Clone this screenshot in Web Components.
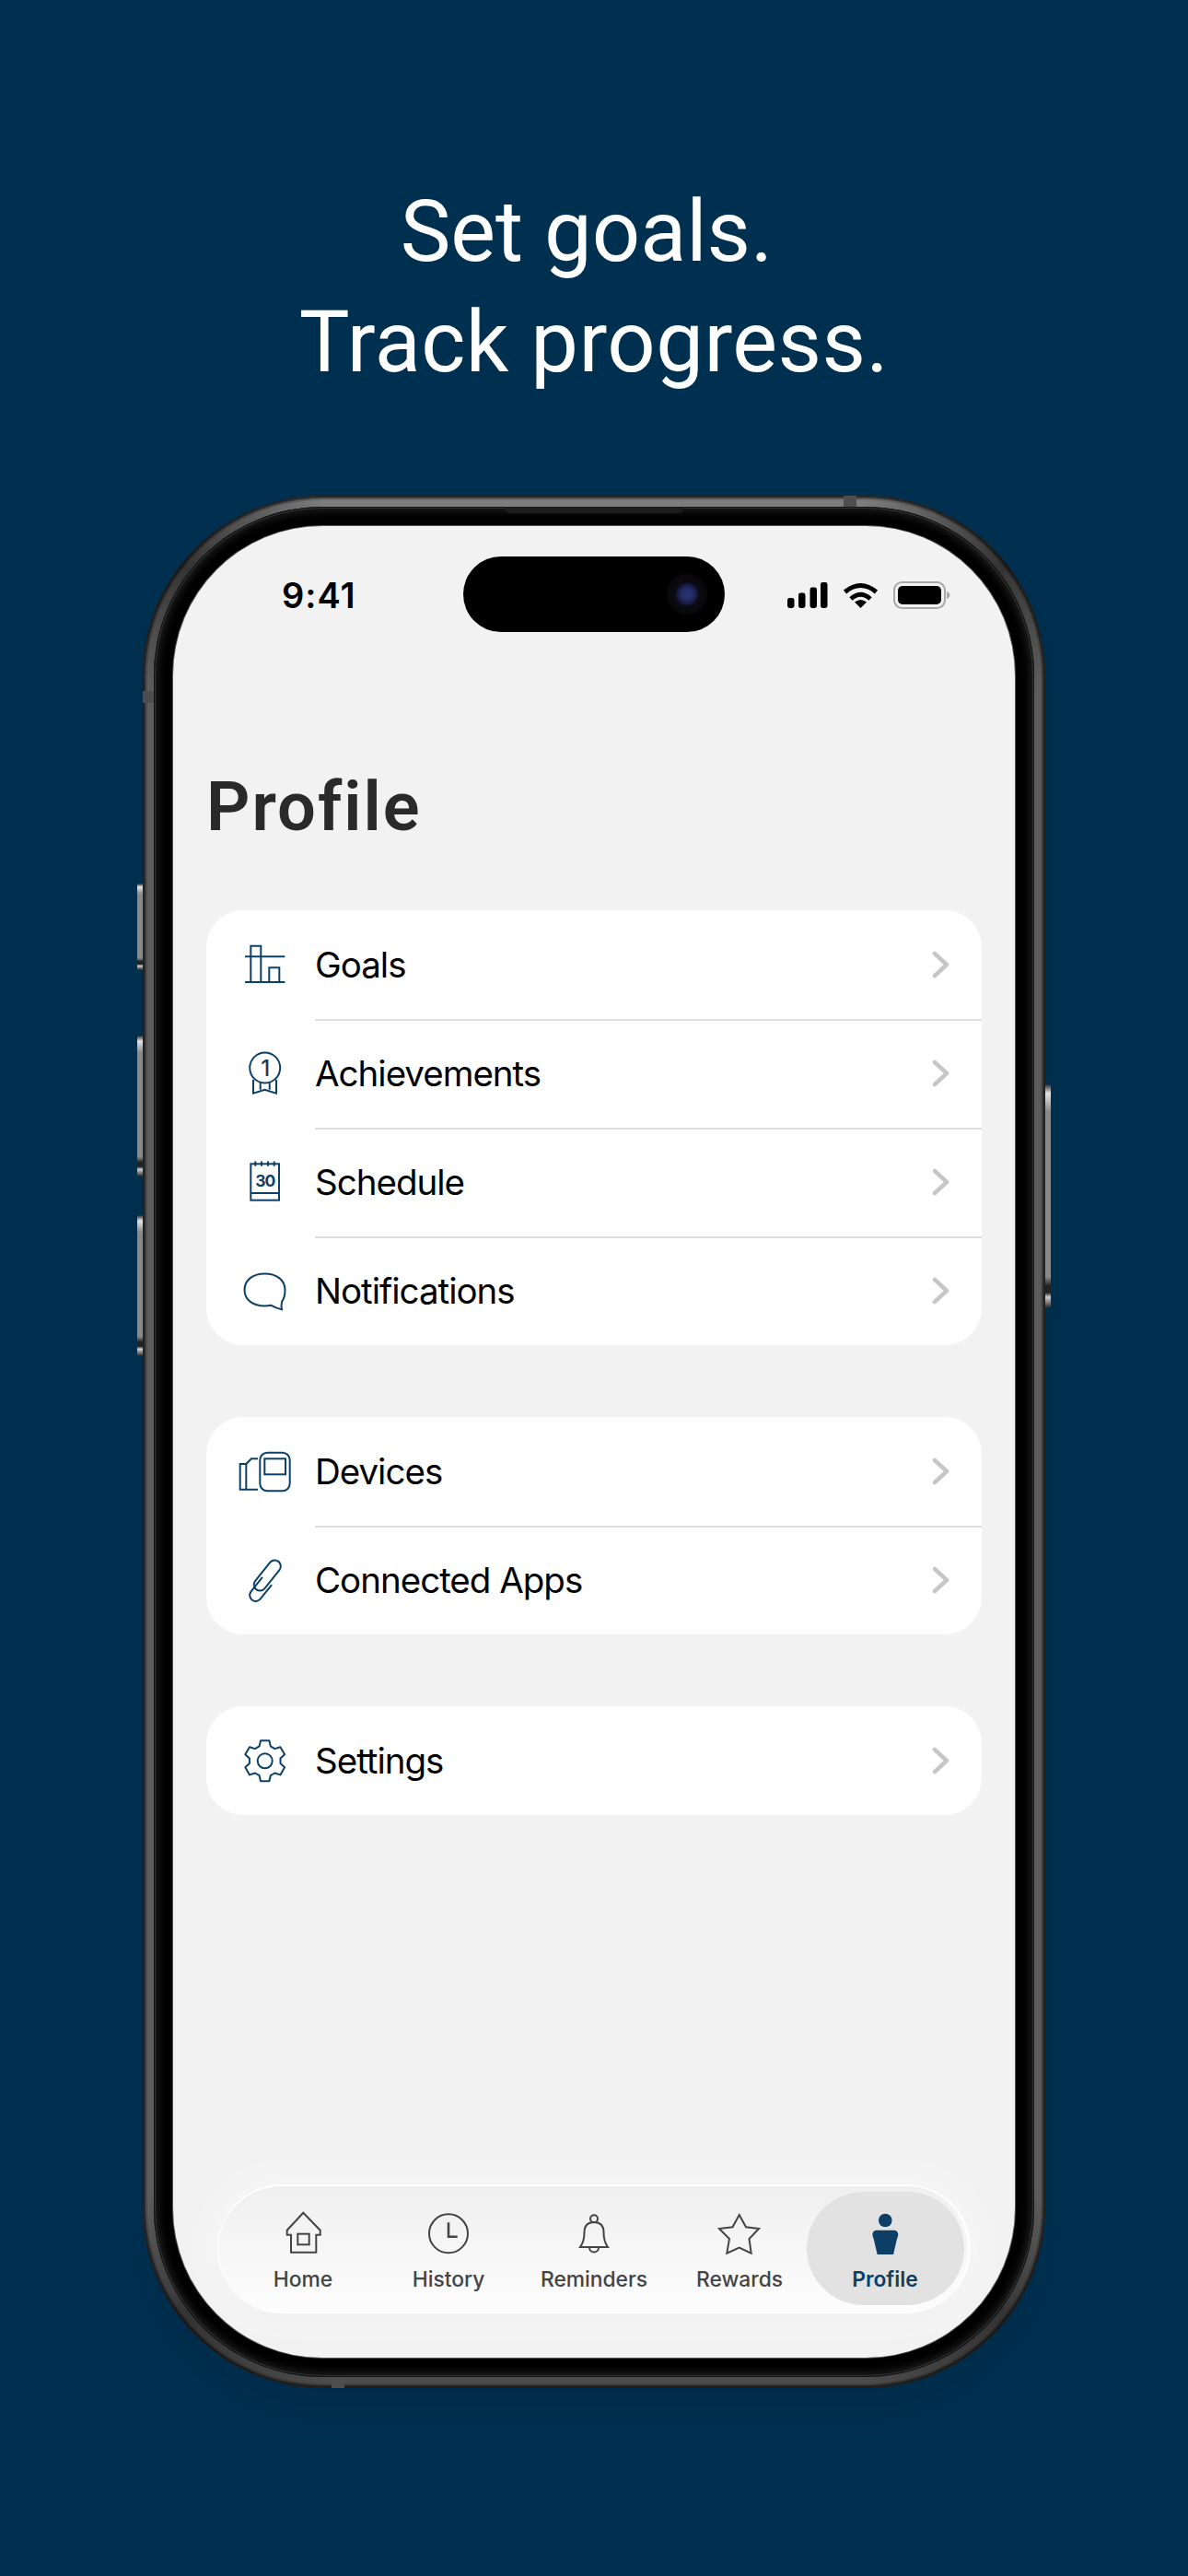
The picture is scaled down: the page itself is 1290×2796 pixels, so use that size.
<!DOCTYPE html>
<html lang="en">
<head>
<meta charset="utf-8">
<title>Profile</title>
<style>
  html, body { margin: 0; background: #003050; }
</style>
</head>
<body>
<promo-page>
  <span slot="headline" style="margin-right:16px;letter-spacing:0">Set goals.</span>
  <span slot="headline">Track progress.</span>
  <phone-frame>
    <status-bar time="9:41"></status-bar>
    <screen-title>Profile</screen-title>
    <row-group>
      <profile-row icon="goals">Goals</profile-row>
      <profile-row icon="achievements">Achievements</profile-row>
      <profile-row icon="schedule">Schedule</profile-row>
      <profile-row icon="notifications">Notifications</profile-row>
    </row-group>
    <row-group>
      <profile-row icon="devices">Devices</profile-row>
      <profile-row icon="apps">Connected Apps</profile-row>
    </row-group>
    <row-group>
      <profile-row icon="settings">Settings</profile-row>
    </row-group>
    <tab-bar>
      <tab-item icon="home">Home</tab-item>
      <tab-item icon="history">History</tab-item>
      <tab-item icon="bell">Reminders</tab-item>
      <tab-item icon="star">Rewards</tab-item>
      <tab-item icon="person" active>Profile</tab-item>
    </tab-bar>
  </phone-frame>
</promo-page>

<script>
function gearPath() {
  const pts = []
  for (let i = 0; i < 6; i++) {
    const a = i * 60 - 90
    for (const [off, r] of [[-21, 17], [-12, 22.5], [12, 22.5], [21, 17]]) {
      const t = (a + off) * Math.PI / 180
      pts.push((39.7 + r * Math.cos(t)).toFixed(1) + ' ' + (40.3 + r * Math.sin(t)).toFixed(1))
    }
  }
  return 'M' + pts.join('L') + 'Z'
}

const ICONS = {
  goals: `<path d="M18 31.3H61.3M18 59H61.3M24.3 59V19.7H35.3V59M44.3 59V43.3H55.3V59"/>`,
  achievements: `<circle cx="39.7" cy="34" r="16.5"/>
    <text x="39.7" y="42.5" font-size="24" font-weight="500" text-anchor="middle">1</text>
    <path d="M27 47V61.7L39.5 57.7L52 61.7V47M34.7 50V57.7M44.7 50V57.7"/>`,
  schedule: `<rect x="24.3" y="20.3" width="30.7" height="39.4"/>
    <path d="M24.3 52H55M29.3 17.5V22.7M36 17.5V22.7M43 17.5V22.7M49.7 17.5V22.7"/>
    <text x="39.8" y="45.3" font-size="17.5" font-weight="700" text-anchor="middle">30</text>`,
  notifications: `<path d="M39.5 21.5C27 21.5 17.5 28 17.5 39C17.5 50 27 56.5 39.5 56.5C41.5 56.5 44 56.2 46 55.7C49 57.5 53.5 59.5 58 60.2C57.2 57 57.5 54 58.2 51.5C60.5 48.5 61.5 44 61.5 39C61.5 28 52 21.5 39.5 21.5Z"/>`,
  devices: `<rect x="34.3" y="19.7" width="32.4" height="41.6" rx="8"/>
    <rect x="39.3" y="26.3" width="22.7" height="17"/>
    <path d="M32 26.3H25L19.3 32V59.7M32 59.7H12.7V32H19.3"/>`,
  apps: `<path d="M47.07 45.06L34.57 60.66A6.5 6.5 0 0 1 24.43 52.54L36.93 36.94"/>
    <path d="M55.4 29.1L39.4 49.1A6.5 6.5 0 0 1 29.2 40.9L45.2 20.9A6.5 6.5 0 0 1 55.4 29.1Z"/>
    <path d="M36.93 36.94A6.5 6.5 0 0 1 47.07 45.06" stroke="#fff" stroke-width="0"/>`,
  settings: `<path stroke-linejoin="round" d="${gearPath()}"/><circle cx="39.7" cy="40.3" r="8"/>`,
  home: `<path d="M24.3 2.7L42.7 21.7V26.7H38.3V45.7H11V26.7H6.7V21.7Z"/><rect x="18.3" y="25.7" width="12.4" height="11.6"/>`,
  history: `<circle cx="24" cy="25.3" r="21"/><path stroke-width="2.6" d="M24 13.3V28.7H33.7"/>`,
  bell: `<circle cx="24" cy="9.3" r="4"/>
    <path d="M9 40C12 36 13.5 32 13.5 24C13.5 17 17 13 24 13C31 13 34.5 17 34.5 24C34.5 32 36 36 39 40Z"/>
    <path d="M19 40.5A5 5 0 0 0 29 40.5"/>`,
  star: `<path d="M23.7 5L31 18.3L45 20L34.5 31L36.7 46.7L23.7 40.7L10.3 46.7L13 31L2 20L16.5 18.3Z"/>`,
  person: `<circle cx="24.3" cy="11" r="7.3" fill="currentColor" stroke="none"/>
    <path fill="currentColor" stroke="none" d="M15 21.7H33.6C36.5 21.7 38.3 23.5 38.3 26.3C38.3 28 37.6 29.5 36.9 31.5L33 48.3H15.7L11.8 31.5C11.1 29.5 10.4 28 10.4 26.3C10.4 23.5 12.2 21.7 15 21.7Z"/>`
}

window.customElements.define('ui-icon', class extends HTMLElement {
  constructor() {
    super()
    this.attachShadow({mode: "open"})
  }

  _render() {
    const size = this.getAttribute('size') ?? '80'
    this.shadowRoot.innerHTML = `
      <style>
        :host { display: block; width: ${size}px; height: ${size}px; }
        svg { display: block; fill: none; stroke: currentColor; stroke-width: 2; }
        text { fill: currentColor; stroke: none; font-family: "Inter", "Liberation Sans", sans-serif; }
      </style>
      <svg width="${size}" height="${size}" viewBox="0 0 ${size} ${size}">${ICONS[this.getAttribute('name')] ?? ''}</svg>
    `
  }

  attributeChangedCallback() {
    this._render()
  }

  static get observedAttributes() { return ['name', 'size'] }
})

window.customElements.define('promo-page', class extends HTMLElement {
  constructor() {
    super()
    this.attachShadow({mode: "open"})
    this.shadowRoot.innerHTML = `
      <style>
        :host {
          display: flex;
          flex-direction: column;
          align-items: center;
          height: 2796px;
          overflow: hidden;
          background: #003050;
        }
        .headline {
          display: flex;
          flex-direction: column;
          align-items: center;
          margin: 192px 0 106px;
          color: #fff;
          font: 400 92px/120px "Roboto", "Liberation Sans", sans-serif;
          letter-spacing: .5px;
        }
      </style>
      <div class="headline"><slot name="headline"></slot></div>
      <slot></slot>
    `
  }
})

window.customElements.define('phone-frame', class extends HTMLElement {
  constructor() {
    super()
    this.attachShadow({mode: "open"})
    this.shadowRoot.innerHTML = `
      <style>
        :host {
          display: block;
          position: relative;
          width: 980px;
          height: 2054px;
        }
        .metal {
          box-sizing: border-box;
          height: 100%;
          padding: 12px;
          border-radius: 195px;
          background: conic-gradient(#7d7d7d 0 16deg, #343434 25deg, #5c5c5c 30.5deg 149.5deg, #343434 155deg, #4c4c4c 164deg 196deg, #343434 205deg, #5c5c5c 210.5deg 329.5deg, #343434 335deg, #7d7d7d 344deg);
          box-shadow: inset 0 0 0 1px #1e1e1e, inset 0 0 0 3px rgba(0,0,0,.45), inset 0 0 0 5px rgba(0,0,0,.15), 0 24px 40px rgba(0,0,0,.08);
        }
        .bezel {
          box-sizing: border-box;
          height: 100%;
          padding: 21px;
          border-radius: 183px;
          background: #000;
          box-shadow: inset 0 0 0 1px #111, inset 0 0 0 2px #333, inset 0 0 9px 5px #1d1d1d;
        }
        .screen {
          box-sizing: border-box;
          display: flex;
          flex-direction: column;
          height: 100%;
          padding: 0 36px;
          border-radius: 162px;
          overflow: hidden;
          background: #f2f2f2;
          box-shadow: 0 0 0 1px #555;
        }
        .speaker {
          position: absolute;
          top: 12px;
          left: 393px;
          width: 194px;
          height: 7px;
          border-radius: 0 0 5px 5px;
          background: #1c1c1c;
        }
        .band { position: absolute; background: #4e4e4e; }
        .band.a { left: 0; top: 212px; width: 12px; height: 13px; }
        .band.b { left: 761px; top: 0; width: 14px; height: 12px; }
        .band.c { left: 205px; bottom: 0; width: 14px; height: 11px; }
        .btn {
          position: absolute;
          width: 6px;
          border-radius: 2px 0 0 2px;
          background: linear-gradient(#2a2a2a 0, #e4e4e4 4%, #8a8a8a 12%, #8a8a8a 86%, #222 90%, #222 93%, #cfcfcf 95%, #222 100%);
        }
        .btn.l { left: -6px; }
        .btn.r { right: -6px; border-radius: 0 2px 2px 0; }
      </style>
      <div class="btn l" style="top:421px;height:94px"></div>
      <div class="btn l" style="top:586px;height:153px"></div>
      <div class="btn l" style="top:781px;height:153px"></div>
      <div class="btn r" style="top:639px;height:243px"></div>
      <div class="metal"><div class="bezel"><div class="screen"><slot></slot></div></div></div>
      <div class="speaker"></div>
      <div class="band a"></div>
      <div class="band b"></div>
      <div class="band c"></div>
    `
  }
})

window.customElements.define('status-bar', class extends HTMLElement {
  constructor() {
    super()
    this.attachShadow({mode: "open"})
    this.shadowRoot.innerHTML = `
      <style>
        :host {
          display: grid;
          grid-template-columns: 1fr 284px 1fr;
          align-items: center;
          margin: 32px -36px 0;
          height: 82px;
          color: #000;
        }
        .time {
          padding: 2px 0 0 118px;
          font: 600 38px/82px "Inter", "Liberation Sans", sans-serif;
          letter-spacing: 1px;
        }
        .island {
          display: flex;
          align-items: center;
          justify-content: flex-end;
          height: 82px;
          padding-right: 19px;
          box-sizing: border-box;
          border-radius: 41px;
          background: #000;
        }
        .camera {
          width: 44px;
          height: 44px;
          border-radius: 50%;
          background: radial-gradient(circle, #27306e 0 5px, #15173c 11px, #0a0a12 13px, #080808 22px);
        }
        .icons {
          display: flex;
          align-items: center;
          gap: 16px;
          padding: 2px 0 0 68px;
        }
        svg { display: block; }
      </style>
      <div class="time"></div>
      <div class="island"><div class="camera"></div></div>
      <div class="icons">
        <svg width="44" height="28" viewBox="0 0 44 28" fill="#000">
          <rect x="0" y="17" width="7.5" height="11" rx="2.4"/>
          <rect x="12" y="11.5" width="7.5" height="16.5" rx="2.4"/>
          <rect x="24.5" y="5.5" width="7.5" height="22.5" rx="2.4"/>
          <rect x="36" y="0" width="7.5" height="28" rx="2.4"/>
        </svg>
        <svg width="39" height="28" viewBox="0 0 39 28" fill="none" stroke="#000" stroke-width="5">
          <path d="M2.5 10.5Q19.5 -3.5 36.5 10.5"/>
          <path d="M9 18Q19.5 8.5 30 18"/>
          <path fill="#000" stroke="none" d="M19.5 28L13 21.5Q19.5 16.5 26 21.5Z"/>
        </svg>
        <svg width="62" height="30" viewBox="0 0 62 30">
          <rect x="1" y="1" width="55" height="28" rx="8.5" fill="none" stroke="#a8a8a8" stroke-width="2"/>
          <rect x="5" y="5" width="47" height="20" rx="5" fill="#000"/>
          <path d="M58 11C60.5 12 61.5 13.5 61.5 15C61.5 16.5 60.5 18 58 19Z" fill="#a8a8a8"/>
        </svg>
      </div>
    `
  }

  connectedCallback() {
    this.shadowRoot.querySelector('.time').textContent = this.getAttribute('time')
  }
})

window.customElements.define('screen-title', class extends HTMLElement {
  constructor() {
    super()
    this.attachShadow({mode: "open"})
    this.shadowRoot.innerHTML = `
      <style>
        :host {
          display: block;
          margin: 146px 0 67px;
          color: #2a2a2a;
          font: 600 74px/90px "Roboto", "Liberation Sans", sans-serif;
          letter-spacing: 2px;
        }
      </style>
      <slot></slot>
    `
  }
})

window.customElements.define('row-group', class extends HTMLElement {
  constructor() {
    super()
    this.attachShadow({mode: "open"})
    this.shadowRoot.innerHTML = `
      <style>
        :host {
          display: block;
          overflow: hidden;
          margin-bottom: 78px;
          border-radius: 40px;
          background: #fff;
        }
      </style>
      <slot></slot>
    `
  }
})

window.customElements.define('profile-row', class extends HTMLElement {
  constructor() {
    super()
    this.attachShadow({mode: "open"})
    this.shadowRoot.innerHTML = `
      <style>
        :host {
          display: flex;
          align-items: center;
          height: 118px;
          padding-left: 24px;
          color: #000;
          font: 400 38.5px/1 "Inter", "Liberation Sans", sans-serif;
          letter-spacing: -1px;
        }
        ui-icon { flex: none; margin-right: 14px; color: #0d4066; }
        .body {
          flex: 1;
          display: flex;
          align-items: center;
          justify-content: space-between;
          height: 100%;
          box-sizing: border-box;
          padding-right: 34px;
        }
        :host(:not(:first-child)) .body { box-shadow: inset 0 2px 0 #dedede; }
        svg { display: block; }
      </style>
      <ui-icon></ui-icon>
      <div class="body">
        <span><slot></slot></span>
        <svg width="20" height="30" viewBox="0 0 20 30" fill="none" stroke="#c6c6c6" stroke-width="4.5" stroke-linecap="round" stroke-linejoin="round">
          <path d="M3 3L16 15L3 27"/>
        </svg>
      </div>
    `
  }

  connectedCallback() {
    this.shadowRoot.querySelector('ui-icon').setAttribute('name', this.getAttribute('icon'))
  }
})

window.customElements.define('tab-bar', class extends HTMLElement {
  constructor() {
    super()
    this.attachShadow({mode: "open"})
    this.shadowRoot.innerHTML = `
      <style>
        :host {
          display: grid;
          grid-template-columns: repeat(5, 158px);
          box-sizing: border-box;
          margin: auto 12px 48px;
          height: 140px;
          padding: 0 14px;
          border-radius: 70px;
          background: linear-gradient(#efefef, #fdfdfd);
          box-shadow: inset 0 2px 0 #fff, inset 2px 0 1px -1px #fff, inset -6px 0 3px -3px #fff, 0 0 34px 14px rgba(255,255,255,.35), 0 16px 22px -6px rgba(0,0,0,.025);
        }
      </style>
      <slot></slot>
    `
  }
})

window.customElements.define('tab-item', class extends HTMLElement {
  constructor() {
    super()
    this.attachShadow({mode: "open"})
    this.shadowRoot.innerHTML = `
      <style>
        :host {
          display: flex;
          flex-direction: column;
          align-items: center;
          position: relative;
          padding-top: 28px;
          color: #444;
          font: 500 22.8px/30px "Inter", "Liberation Sans", sans-serif;
        }
        :host([active]) { color: #0d3f66; font-weight: 600; }
        :host([active])::before {
          content: "";
          position: absolute;
          top: 8px;
          left: -6px;
          width: 171px;
          height: 123px;
          border-radius: 62px;
          background: #e2e2e2;
        }
        ui-icon, .label { position: relative; }
        .label { margin-top: 12px; white-space: nowrap; }
      </style>
      <ui-icon size="48"></ui-icon>
      <span class="label"><slot></slot></span>
    `
  }

  connectedCallback() {
    this.shadowRoot.querySelector('ui-icon').setAttribute('name', this.getAttribute('icon'))
  }
})
</script>
</body>
</html>
